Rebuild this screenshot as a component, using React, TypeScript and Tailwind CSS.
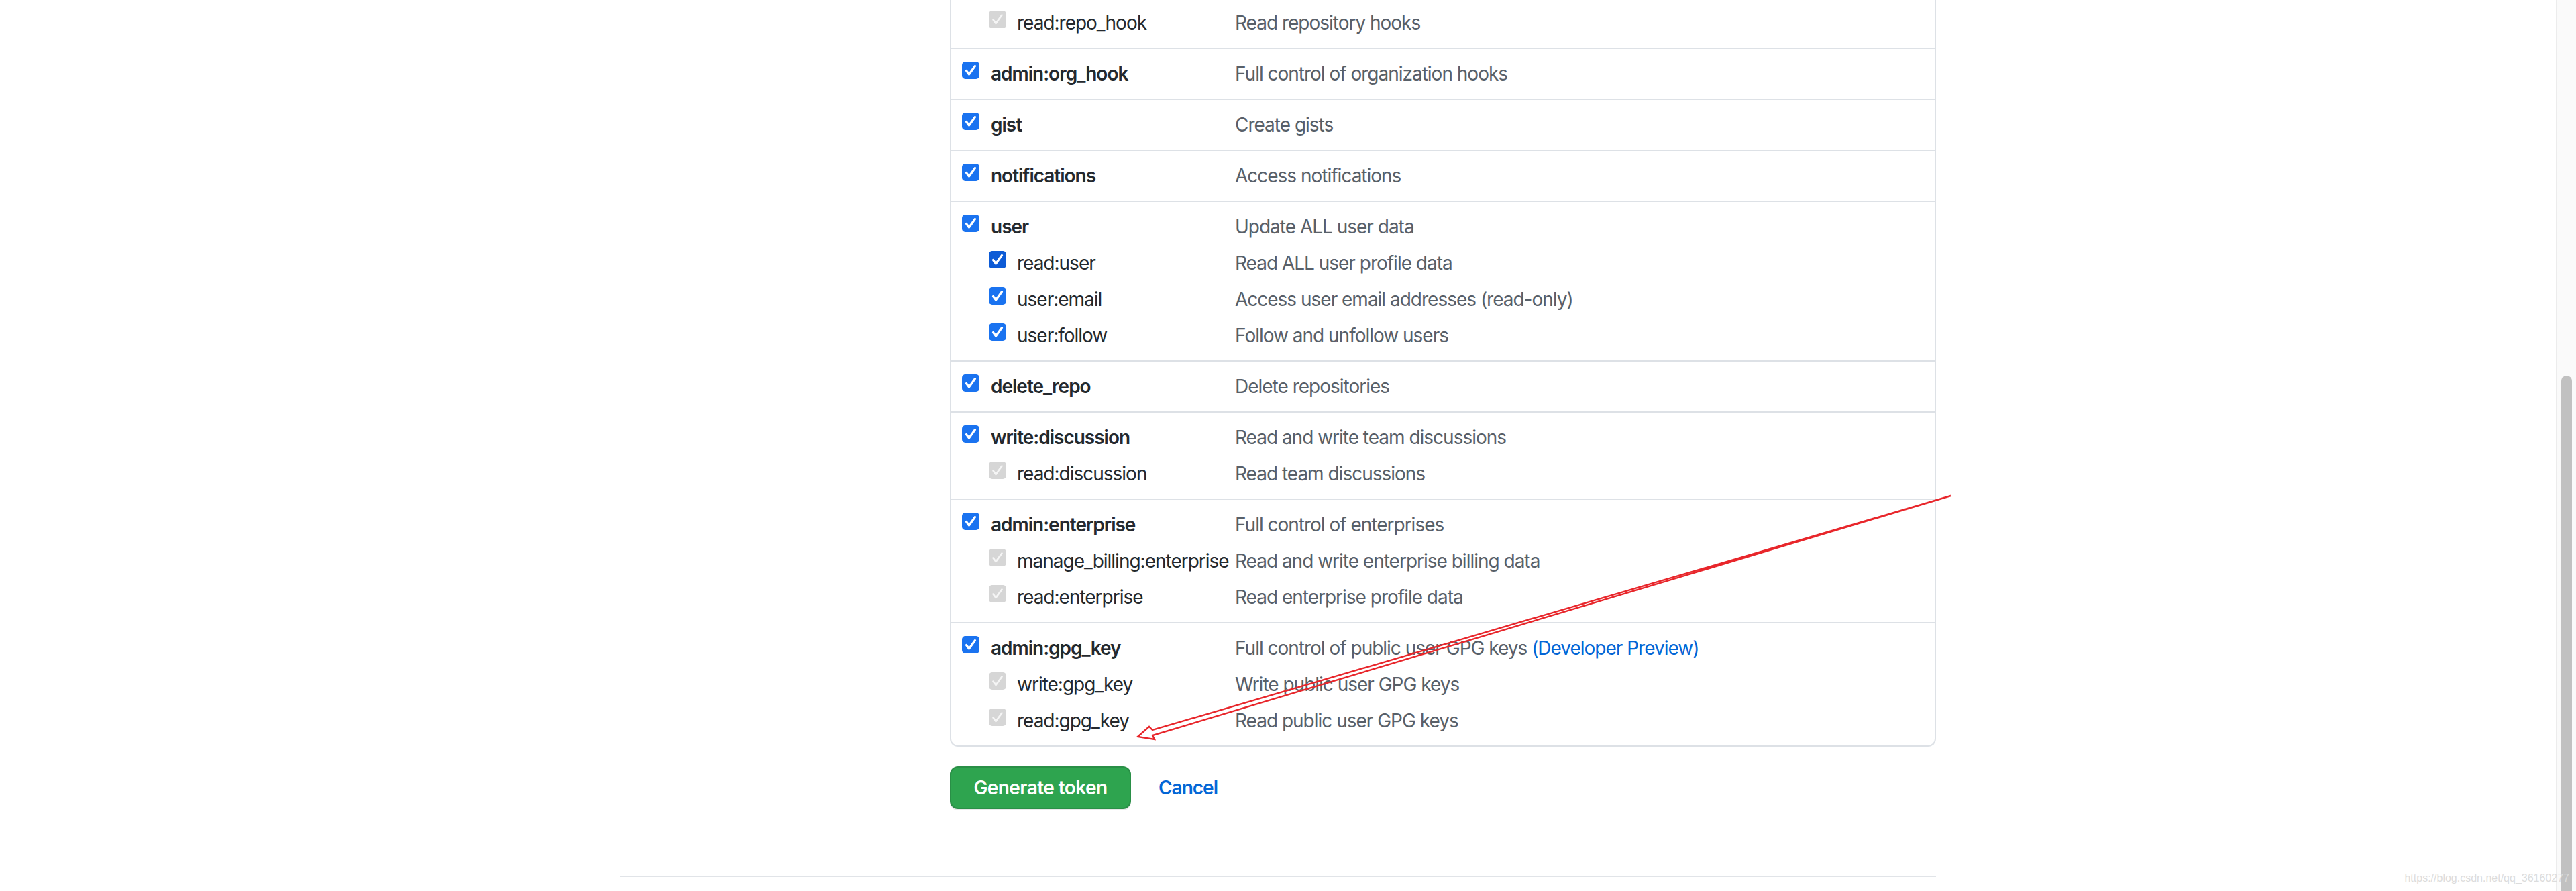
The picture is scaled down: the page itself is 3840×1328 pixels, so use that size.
type Sub = { scope: string; desc: string; state: 'on' | 'focus' | 'off' };
type Group = { scope?: string; desc?: string; preview?: boolean; children?: Sub[] };

// first group is the tail of admin:repo_hook, scrolled past the top of the view
const groups: Group[] = [
  { children: [{ scope: 'read:repo_hook', desc: 'Read repository hooks', state: 'off' }] },
  { scope: 'admin:org_hook', desc: 'Full control of organization hooks' },
  { scope: 'gist', desc: 'Create gists' },
  { scope: 'notifications', desc: 'Access notifications' },
  {
    scope: 'user',
    desc: 'Update ALL user data',
    children: [
      { scope: 'read:user', desc: 'Read ALL user profile data', state: 'focus' },
      { scope: 'user:email', desc: 'Access user email addresses (read-only)', state: 'on' },
      { scope: 'user:follow', desc: 'Follow and unfollow users', state: 'on' },
    ],
  },
  { scope: 'delete_repo', desc: 'Delete repositories' },
  {
    scope: 'write:discussion',
    desc: 'Read and write team discussions',
    children: [{ scope: 'read:discussion', desc: 'Read team discussions', state: 'off' }],
  },
  {
    scope: 'admin:enterprise',
    desc: 'Full control of enterprises',
    children: [
      { scope: 'manage_billing:enterprise', desc: 'Read and write enterprise billing data', state: 'off' },
      { scope: 'read:enterprise', desc: 'Read enterprise profile data', state: 'off' },
    ],
  },
  {
    scope: 'admin:gpg_key',
    desc: 'Full control of public user GPG keys',
    preview: true,
    children: [
      { scope: 'write:gpg_key', desc: 'Write public user GPG keys', state: 'off' },
      { scope: 'read:gpg_key', desc: 'Read public user GPG keys', state: 'off' },
    ],
  },
];

function Check({ state }: { state: 'on' | 'focus' | 'off' }) {
  const bg = state === 'on' ? 'bg-[#1a73f0]' : state === 'focus' ? 'bg-[#0d5bd6]' : 'bg-[#d6d6d6]';
  return (
    <span className={`mt-[3px] flex h-[26px] w-[26px] shrink-0 items-center justify-center rounded-[5px] ${bg}`}>
      <svg viewBox="0 0 26 26" className="h-[26px] w-[26px]">
        <path
          d="M6.5 13.5 L10.5 19 L19.5 6.5"
          fill="none"
          stroke={state === 'off' ? '#f5f5f5' : '#ffffff'}
          strokeWidth={state === 'off' ? 2.6 : 3.2}
          strokeLinecap="round"
          strokeLinejoin="round"
        />
      </svg>
    </span>
  );
}

function ScopeGroup({ group }: { group: Group }) {
  return (
    <div className="flex flex-col gap-3 border-t-2 border-[#dde1e6] py-4 pl-4 first:border-t-0">
      {group.scope && (
        <div className="flex h-[42px] items-start">
          <div className="flex w-[407px] shrink-0 items-start">
            <Check state="on" />
            <span className="ml-[17px] font-semibold text-[#24292e]">{group.scope}</span>
          </div>
          <span className="text-[#586069]">
            {group.desc}
            {group.preview && <span className="text-[#0366d6]"> (Developer Preview)</span>}
          </span>
        </div>
      )}
      {group.children?.map((sub) => (
        <div key={sub.scope} className="flex h-[42px] items-start">
          <div className="flex w-[407px] shrink-0 items-start pl-10">
            <Check state={sub.state} />
            <span className="ml-4 whitespace-nowrap text-[#24292e]">{sub.scope}</span>
          </div>
          <span className="text-[#586069]">{sub.desc}</span>
        </div>
      ))}
    </div>
  );
}

export default function App() {
  return (
    <div className="relative flex h-[1328px] w-[3840px] overflow-hidden bg-white font-['Inter',sans-serif] text-[28px] leading-[42px] tracking-[-0.036em]">
      <div className="w-[3810px] shrink-0">
        <div className="mx-auto w-[1962px]">
          <div className="flex">
            <div className="w-[492px] shrink-0" />
            <div className="w-[1470px] shrink-0">
              <div className="-mt-[3px] rounded-b-[12px] border-2 border-t-0 border-[#dde1e6]">
                {groups.map((g, i) => (
                  <ScopeGroup key={g.scope ?? i} group={g} />
                ))}
              </div>
              <div className="mt-[29px] flex items-center">
                <button className="flex h-[64px] w-[270px] items-center justify-center rounded-[12px] border-2 border-[#2a8f47] bg-[#2ea44f] font-semibold tracking-[-0.02em] text-white shadow-[0_2px_0_rgba(27,31,35,0.1)]">
                  Generate token
                </button>
                <a className="ml-[41px] font-semibold text-[#0366d6]">Cancel</a>
              </div>
            </div>
          </div>
          <div className="mt-[99px] border-t-2 border-[#e1e4e8]" />
        </div>
      </div>

      <div className="flex w-[30px] shrink-0 flex-col border-l-2 border-[#ececec] bg-[#fafafa]">
        <div className="ml-[6px] mt-[560px] w-4 flex-1 rounded-t-full bg-[#c1c1c1]" />
      </div>

      <svg className="pointer-events-none absolute left-0 top-0" width="3840" height="1328" viewBox="0 0 3840 1328">
        <polygon
          points="2908,739 1718,1088 1713,1083 1696,1098 1721,1102 1718,1096"
          fill="none"
          stroke="#e8262b"
          strokeWidth="2.4"
          strokeLinejoin="miter"
        />
      </svg>

      <span className="pointer-events-none absolute bottom-[9px] right-[10px] font-['Liberation_Sans',Arial,sans-serif] text-[16px] leading-[20px] tracking-normal text-[#dcdcdc]">
        https://blog.csdn.net/qq_36160277
      </span>
    </div>
  );
}
